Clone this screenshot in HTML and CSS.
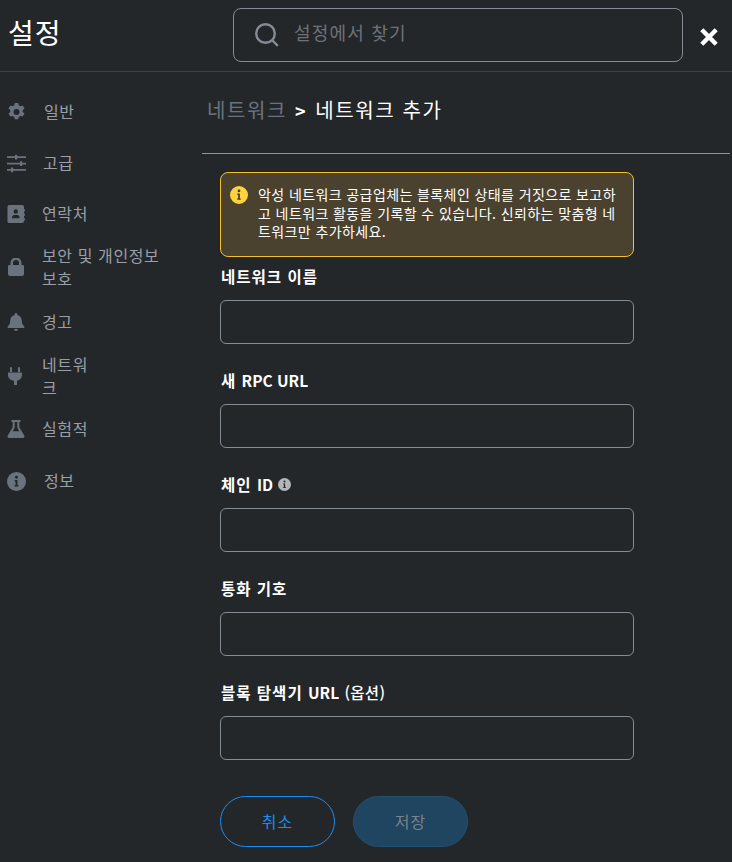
FILE: index.html
```html
<!DOCTYPE html>
<html lang="ko">
<head>
<meta charset="utf-8">
<title>설정</title>
<link rel="stylesheet" href="styles.css">
</head>
<body>
<header class="top">
  <h1 class="title">설정</h1>
  <div class="search">
    <svg class="search-icon" viewBox="0 0 24 24" width="24" height="24"><circle cx="10.500" cy="10.500" r="9.300" fill="none" stroke="#848c96" stroke-width="2.400"/><path d="M17 17l5.800 5.800" stroke="#848c96" stroke-width="2.400" fill="none"/></svg>
    <span class="search-text">설정에서 찾기</span>
  </div>
  <svg class="close" viewBox="0 0 20 20" width="20" height="20"><path d="M2.800 2.800l14.400 14.400M17.200 2.800L2.800 17.200" stroke="#fff" stroke-width="4.400" fill="none"/></svg>
</header>
<div class="layout">
  <nav class="side">
    <div class="item i1"><svg class="ico" viewBox="-1 0 18 18"><path fill-rule="evenodd" d="M6.800 0h3.400l.5 2.300 1.700 1 2.300-.7 1.800 3-1.800 1.600v1.800l1.800 1.600-1.800 3-2.300-.7-1.700 1-.5 2.300H6.800l-.5-2.300-1.700-1-2.300.7-1.800-3 1.800-1.600V7.200L.5 5.600l1.800-3 2.300.7 1.700-1zM8.500 6a3 3 0 1 0 0 6 3 3 0 0 0 0-6z"/></svg><span>일반</span></div>
    <div class="item i2"><svg class="ico ico-lg" viewBox="0 0 19 19"><path d="M0 2.200h8V.7h2.200v1.500H19v1.700h-8.800v1.500H8V3.900H0zM0 8.700h13V7.200h2.200v1.500H19v1.700h-3.800v1.500H13v-1.500H0zM0 15h4v-1.500h2.200V15H19v1.700H6.200v1.500H4v-1.500H0z"/></svg><span>고급</span></div>
    <div class="item i3"><svg class="ico" viewBox="0 0 18 18"><path fill-rule="evenodd" d="M2 0h13a2 2 0 0 1 2 2v2h.8v2.500H17v2h.8V11H17v2h.8v2.500H17v.5a2 2 0 0 1-2 2H2a1.500 1.500 0 0 1-1.500-1.500v-15A1.500 1.500 0 0 1 2 0zm6.800 4.300a2.200 2.200 0 1 0 0 4.400 2.200 2.200 0 0 0 0-4.400zM5 12.500c0-1.500 1-2.600 2.400-2.600h2.800c1.400 0 2.400 1.100 2.400 2.600v.7H5z"/></svg><span>연락처</span></div>
    <div class="item i4"><svg class="ico" viewBox="0 0 18 18"><path fill-rule="evenodd" d="M3.500 7V5a5.500 5.500 0 0 1 11 0v2H16a1.500 1.500 0 0 1 1 1.500V16a2 2 0 0 1-2 2H3a2 2 0 0 1-2-2V8.500A1.500 1.500 0 0 1 2 7zm2.500 0h6V5a3 3 0 0 0-6 0z"/></svg><span>보안 및 개인정보<br>보호</span></div>
    <div class="item i5"><svg class="ico" viewBox="0 0 18 18"><path d="M9 0a1.300 1.300 0 0 1 1.300 1.300v.6c2.700.6 4.500 2.900 4.500 5.600 0 3.500 1.200 4.700 2.500 6 .3.400.2 1.500-.8 1.500H1.500c-1 0-1.100-1.100-.8-1.500 1.300-1.300 2.500-2.500 2.500-6 0-2.700 1.800-5 4.500-5.600v-.6A1.300 1.300 0 0 1 9 0zM7 16h4a2 2 0 0 1-4 0z"/></svg><span>경고</span></div>
    <div class="item i6"><svg class="ico" viewBox="1 0 18 18"><path d="M5 0a1 1 0 0 1 1 1v4H4V1a1 1 0 0 1 1-1zM13 0a1 1 0 0 1 1 1v4h-2V1a1 1 0 0 1 1-1zM2 5.500h14V8c0 3-2 5.300-5 5.800V18H8v-4.200C4 13.300 2 11 2 8z"/></svg><span>네트워<br>크</span></div>
    <div class="item i7"><svg class="ico" viewBox="0 0 18 18"><path fill-rule="evenodd" d="M4.500 0h9v2H12.300v5.200l5 8.300c.6 1.100-.1 2.500-1.400 2.500H2.100C.8 18 .1 16.600.7 15.500l5-8.300V2H4.500zM7.700 2v5.700L5.600 11.200h6.800L10.300 7.700V2z"/></svg><span>실험적</span></div>
    <div class="item i8"><svg class="ico ico-lg" viewBox="0 0 18 18"><path fill-rule="evenodd" d="M9 0a9 9 0 1 1 0 18A9 9 0 0 1 9 0zM9 3.500a1.400 1.400 0 1 0 0 2.800 1.400 1.400 0 0 0 0-2.800zM7.300 7.600v1.300h.8v3.500h-.9v1.300h3.600v-1.300h-.9V7.600z"/></svg><span>정보</span></div>
  </nav>
  <main class="content">
    <div class="crumbs"><span class="crumb-back">네트워크</span><span class="crumb-sep">&gt;</span><span class="crumb-cur">네트워크 추가</span></div>
    <div class="form">
      <div class="alert">
        <svg class="alert-ico" viewBox="0 0 18 18" width="18" height="18"><path fill="#ffd33d" fill-rule="evenodd" d="M9 0a9 9 0 1 1 0 18A9 9 0 0 1 9 0zM9 3.500a1.400 1.400 0 1 0 0 2.800 1.400 1.400 0 0 0 0-2.800zM7.300 7.600v1.300h.8v3.500h-.9v1.300h3.600v-1.300h-.9V7.600z"/></svg>
        <p class="alert-text">악성 네트워크 공급업체는 블록체인 상태를 거짓으로 보고하<br>고 네트워크 활동을 기록할 수 있습니다. 신뢰하는 맞춤형 네<br>트워크만 추가하세요.</p>
      </div>
      <label class="field"><span class="label"><span>네트워크 이름</span></span><span class="input"></span></label>
      <label class="field"><span class="label"><span>새 <span class="en">RPC URL</span></span></span><span class="input"></span></label>
      <label class="field"><span class="label"><span>체인 <span class="en">ID</span></span><svg viewBox="0 0 18 18" width="13" height="13"><path fill="#b2b6bb" fill-rule="evenodd" d="M9 0a9 9 0 1 1 0 18A9 9 0 0 1 9 0zM9 3.500a1.400 1.400 0 1 0 0 2.800 1.400 1.400 0 0 0 0-2.800zM7.300 7.600v1.300h.8v3.500h-.9v1.300h3.600v-1.300h-.9V7.600z"/></svg></span><span class="input"></span></label>
      <label class="field"><span class="label"><span>통화 기호</span></span><span class="input"></span></label>
      <label class="field"><span class="label"><span>블록 탐색기 <span class="en">URL</span> <span class="opt">(옵션)</span></span></span><span class="input"></span></label>
      <div class="actions"><button class="btn cancel">취소</button><button class="btn save">저장</button></div>
    </div>
  </main>
</div>
</body>
</html>
```
FILE: styles.css
```css
* { box-sizing: border-box; }
html, body { margin: 0; height: 100%; }
body {
  width: 732px;
  height: 862px;
  overflow: hidden;
  background: #24272a;
  color: #fff;
  font-family: "Noto Sans CJK KR", "Liberation Sans", sans-serif;
}
.top {
  height: 72px;
  border-bottom: 1px solid #3b4046;
  display: flex;
  align-items: flex-start;
  padding: 8px 0 0 8px;
}
.title { margin: 0; width: 225px; font-size: 28px; font-weight: 400; line-height: 48px; letter-spacing: 1px; }
.search {
  width: 450px;
  height: 54px;
  border: 1px solid #848c96;
  border-radius: 8px;
  display: flex;
  align-items: center;
  padding: 0 0 2px 21px;
}
.search-text { margin-left: 15px; font-size: 18px; letter-spacing: 1.200px; color: #6d7278; position: relative; top: -2px; }
.search-icon { flex: none; margin-top: 2px; }
.close { margin: 19px 0 0 16px; }
.layout { display: flex; height: 790px; }
.side { width: 202px; flex: none; padding: 15px 0 0 7px; }
.item { display: flex; align-items: center; color: #9a9fa5; font-size: 16px; line-height: 23.500px; letter-spacing: .6px; }
.ico { width: 18px; height: 18px; flex: none; fill: #6a737d; }
.ico-lg { width: 19px; height: 19px; }
.item span { margin-left: 17px; }
.i1 { height: 50px; }
.i2 { height: 52px; }
.i3 { height: 50px; }
.i4 { height: 56px; }
.i5 { height: 54px; }
.i6 { height: 54px; }
.i7 { height: 52px; }
.i8 { height: 52px; }
.i1 span { margin-left: 19px; }
.i2 span { margin-left: 17px; }
.i8 span { margin-left: 18px; }
.content { flex: 1; min-width: 0; padding-right: 2px; }
.crumbs {
  height: 82px;
  border-bottom: 1px solid #8f9499;
  display: flex;
  align-items: flex-start;
  padding: 24px 0 0 5px;
  font-size: 20px;
  line-height: 28px;
  letter-spacing: 1.600px;
}
.crumb-back { color: #6a737d; }
.crumb-sep { margin: 0 8px; font-size: 18px; font-weight: 700; }
.form { padding: 18px 0 0 18px; width: 432px; }
.alert {
  height: 85px;
  background: #4a412e;
  border: 1px solid #f5bf2a;
  border-radius: 8px;
  display: flex;
  padding: 13px 0 0 9px;
}
.alert-ico { flex: none; margin-right: 10px; }
.alert-text { margin: 0; font-size: 14px; line-height: 18.500px; letter-spacing: .4px; white-space: nowrap; position: relative; top: -1px; }
.field { display: block; height: 104px; padding-top: 7px; }
.label { display: flex; align-items: center; gap: 5px; height: 24px; margin-bottom: 12px; padding-left: 1px; font-size: 15.500px; font-weight: 700; letter-spacing: 1px; }
.en { letter-spacing: 0; }
.opt { font-weight: 500; letter-spacing: .3px; }
.input { display: block; height: 44px; border: 1px solid #848c96; border-radius: 6px; }
.actions { display: flex; gap: 18px; margin-top: 19px; }
.btn {
  width: 115px;
  height: 51px;
  border-radius: 26px;
  font: inherit;
  font-size: 16px;
  letter-spacing: 1px;
  padding: 0 0 2px;
  background: none;
}
.cancel { border: 1px solid #1a8ef0; color: #1a8ef0; }
.save { background: #204560; border: 1px solid #234f70; color: #7b838a; }
```
